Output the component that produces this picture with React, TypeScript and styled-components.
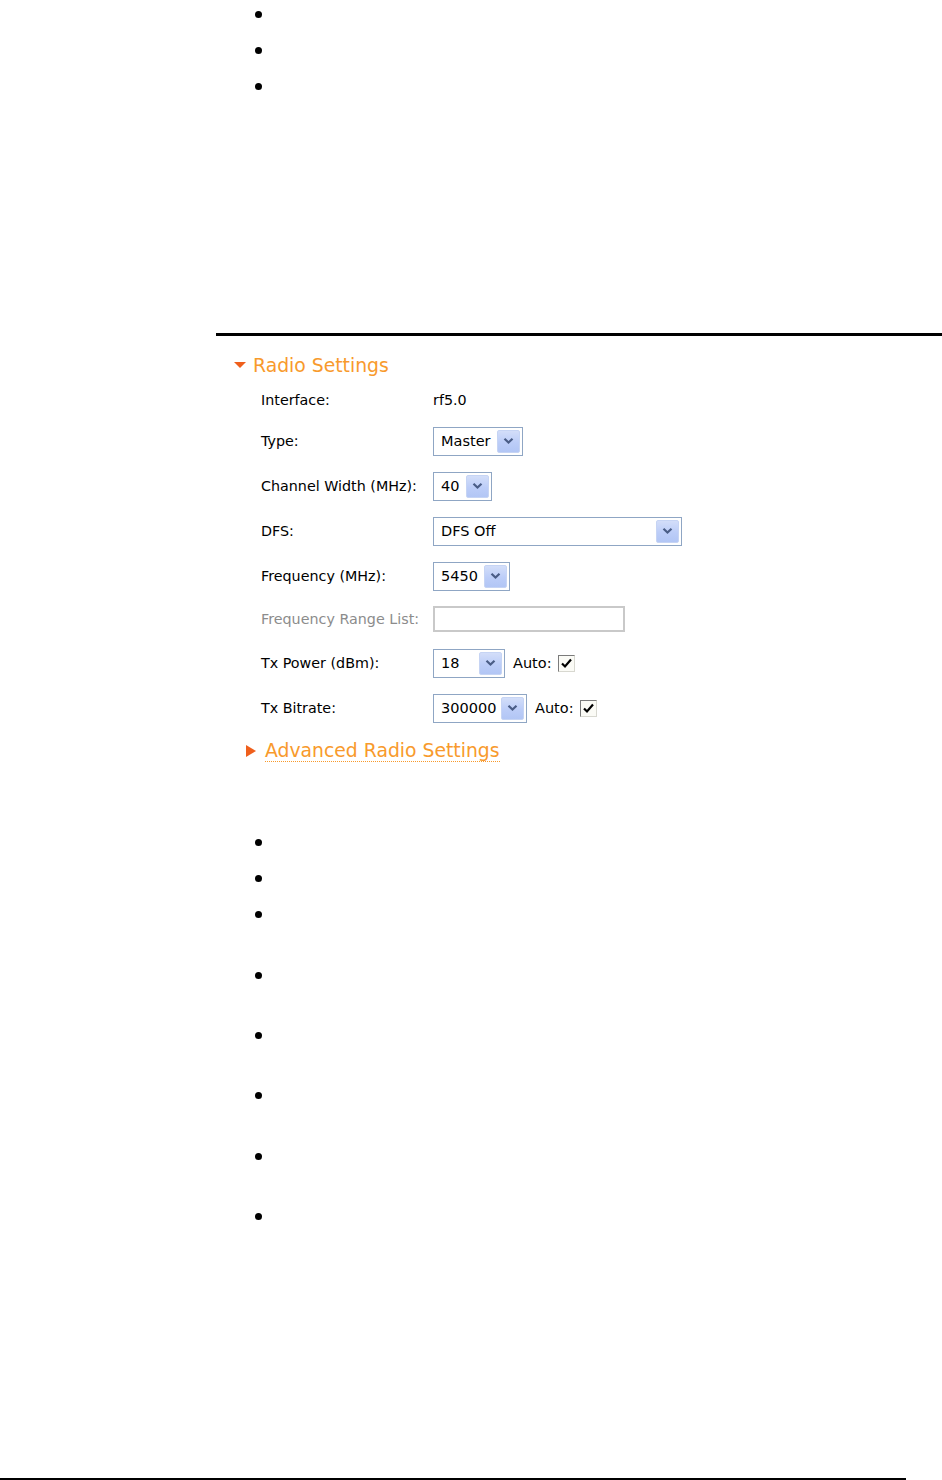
import React from 'react'
import styled, { createGlobalStyle } from 'styled-components'

const GlobalStyle = createGlobalStyle`
  html, body {
    margin: 0;
    padding: 0;
    background: #ffffff;
  }
  body {
    font-family: "DejaVu Sans", Verdana, sans-serif;
    color: #000;
  }
`

const Page = styled.div`
  width: 942px;
  height: 1480px;
  overflow: hidden;
  display: flex;
  flex-direction: column;
`

const BulletList = styled.ul<{ $top?: number }>`
  list-style: none;
  margin: ${({ $top }) => $top || 0}px 0 0 0;
  padding: 0 0 0 255px;
`

const Bullet = styled.li<{ $h: number }>`
  height: ${({ $h }) => $h}px;
  display: flex;
  align-items: flex-start;

  &::before {
    content: '';
    width: 7px;
    height: 7px;
    margin-top: 11px;
    border-radius: 50%;
    background: #000;
  }
`

const Rule = styled.div<{ $left: number; $width?: number; $thick: number; $top: number }>`
  margin-top: ${({ $top }) => $top}px;
  margin-left: ${({ $left }) => $left}px;
  width: ${({ $width }) => ($width ? `${$width}px` : 'auto')};
  height: ${({ $thick }) => $thick}px;
  background: #000;
  flex-shrink: 0;
`

const Section = styled.section`
  padding-left: 234px;
  display: flex;
  flex-direction: column;
`

const Heading = styled.div`
  margin-top: 19px;
  height: 20px;
  display: flex;
  align-items: center;
  gap: 7px;
  font-size: 18.8px;
  color: #f89a2c;
`

const DownTriangle = styled.span`
  width: 0;
  height: 0;
  border-left: 6px solid transparent;
  border-right: 6px solid transparent;
  border-top: 6px solid #ef5f1c;
`

const RightTriangle = styled.span`
  width: 0;
  height: 0;
  border-top: 6px solid transparent;
  border-bottom: 6px solid transparent;
  border-left: 10px solid #ef5f1c;
`

const Form = styled.div`
  padding-left: 27px;
  margin-top: 10.5px;
  display: flex;
  flex-direction: column;
`

const Row = styled.div<{ $top: number }>`
  margin-top: ${({ $top }) => $top}px;
  height: 29px;
  display: flex;
  align-items: center;
  font-size: 14.3px;
`

const Label = styled.div<{ $disabled?: boolean }>`
  width: 172px;
  flex-shrink: 0;
  color: ${({ $disabled }) => ($disabled ? '#8c8c8c' : '#000')};
`

const Value = styled.div`
  display: flex;
  align-items: center;
`

const SelectBox = styled.div<{ $width: number }>`
  box-sizing: border-box;
  width: ${({ $width }) => $width}px;
  height: 29px;
  border: 1px solid #8fa6c4;
  box-shadow: inset 0 0 0 1px #ffffff;
  background: #fff;
  padding: 2px;
  display: flex;
  align-items: stretch;
`

const SelectText = styled.div`
  flex: 1;
  display: flex;
  align-items: center;
  padding-left: 5px;
  font-size: 14.5px;
  color: #000;
`

const ArrowButton = styled.div`
  width: 21px;
  border: 1px solid #c6d4f4;
  border-radius: 2px;
  background: linear-gradient(180deg, #d3def9 0%, #bccdf8 55%, #b2c6f5 100%);
  display: flex;
  align-items: center;
  justify-content: center;
`

const TextInput = styled.div`
  box-sizing: border-box;
  width: 192px;
  height: 26px;
  border: 2px solid #c9c9c9;
  background: #fff;
`

const AutoLabel = styled.span`
  margin-left: 8px;
  margin-right: 6px;
  font-size: 14.5px;
`

const CheckBox = styled.span`
  box-sizing: border-box;
  width: 17px;
  height: 17px;
  border: 1px solid #d8d8d0;
  border-top-color: #7b7b7b;
  border-left-color: #7b7b7b;
  background: #fbfbf6;
  display: flex;
  align-items: center;
  justify-content: center;
`

const Advanced = styled.div`
  margin-top: 18.5px;
  padding-left: 12px;
  height: 20px;
  display: flex;
  align-items: center;
  gap: 9px;
  font-size: 18.8px;
`

const AdvancedLink = styled.a`
  color: #f89a2c;
  text-decoration: none;
  border-bottom: 1px dotted #f89a2c;
  line-height: 20px;
`

const Chevron = () => (
  <svg width="11" height="8" viewBox="0 0 11 8">
    <path d="M1.5 1.8 L5.5 5.6 L9.5 1.8" fill="none" stroke="#4a5d86" strokeWidth="2.2" />
  </svg>
)

const Check = () => (
  <svg width="13" height="13" viewBox="0 0 13 13">
    <path d="M2 6.5 L5 9.5 L11 2.5" fill="none" stroke="#000" strokeWidth="2.2" />
  </svg>
)

const Select = ({ value, width }: { value: string; width: number }) => (
  <SelectBox $width={width}>
    <SelectText>{value}</SelectText>
    <ArrowButton>
      <Chevron />
    </ArrowButton>
  </SelectBox>
)

const topBullets = [36, 36, 36]
const bottomBullets = [36, 36, 61, 60, 60, 61, 60, 36]

const App = () => {
  return (
    <Page>
      <GlobalStyle />
      <BulletList>
        {topBullets.map((h, i) => (
          <Bullet key={i} $h={h} />
        ))}
      </BulletList>

      <Rule $top={225} $left={216} $thick={3} />

      <Section>
        <Heading>
          <DownTriangle />
          <span>Radio Settings</span>
        </Heading>

        <Form>
          <Row $top={0}>
            <Label>Interface:</Label>
            <Value>rf5.0</Value>
          </Row>
          <Row $top={12}>
            <Label>Type:</Label>
            <Select value="Master" width={90} />
          </Row>
          <Row $top={16}>
            <Label>Channel Width (MHz):</Label>
            <Select value="40" width={59} />
          </Row>
          <Row $top={16}>
            <Label>DFS:</Label>
            <Select value="DFS Off" width={249} />
          </Row>
          <Row $top={16}>
            <Label>Frequency (MHz):</Label>
            <Select value="5450" width={77} />
          </Row>
          <Row $top={14}>
            <Label $disabled>Frequency Range List:</Label>
            <TextInput />
          </Row>
          <Row $top={15}>
            <Label>Tx Power (dBm):</Label>
            <Value>
              <Select value="18" width={72} />
              <AutoLabel>Auto:</AutoLabel>
              <CheckBox>
                <Check />
              </CheckBox>
            </Value>
          </Row>
          <Row $top={16}>
            <Label>Tx Bitrate:</Label>
            <Value>
              <Select value="300000" width={94} />
              <AutoLabel>Auto:</AutoLabel>
              <CheckBox>
                <Check />
              </CheckBox>
            </Value>
          </Row>
        </Form>

        <Advanced>
          <RightTriangle />
          <AdvancedLink href="#">Advanced Radio Settings</AdvancedLink>
        </Advanced>
      </Section>

      <BulletList $top={66.5}>
        {bottomBullets.map((h, i) => (
          <Bullet key={i} $h={h} />
        ))}
      </BulletList>

      <Rule $top={240} $left={0} $width={906} $thick={2} />
    </Page>
  )
}

export default App
